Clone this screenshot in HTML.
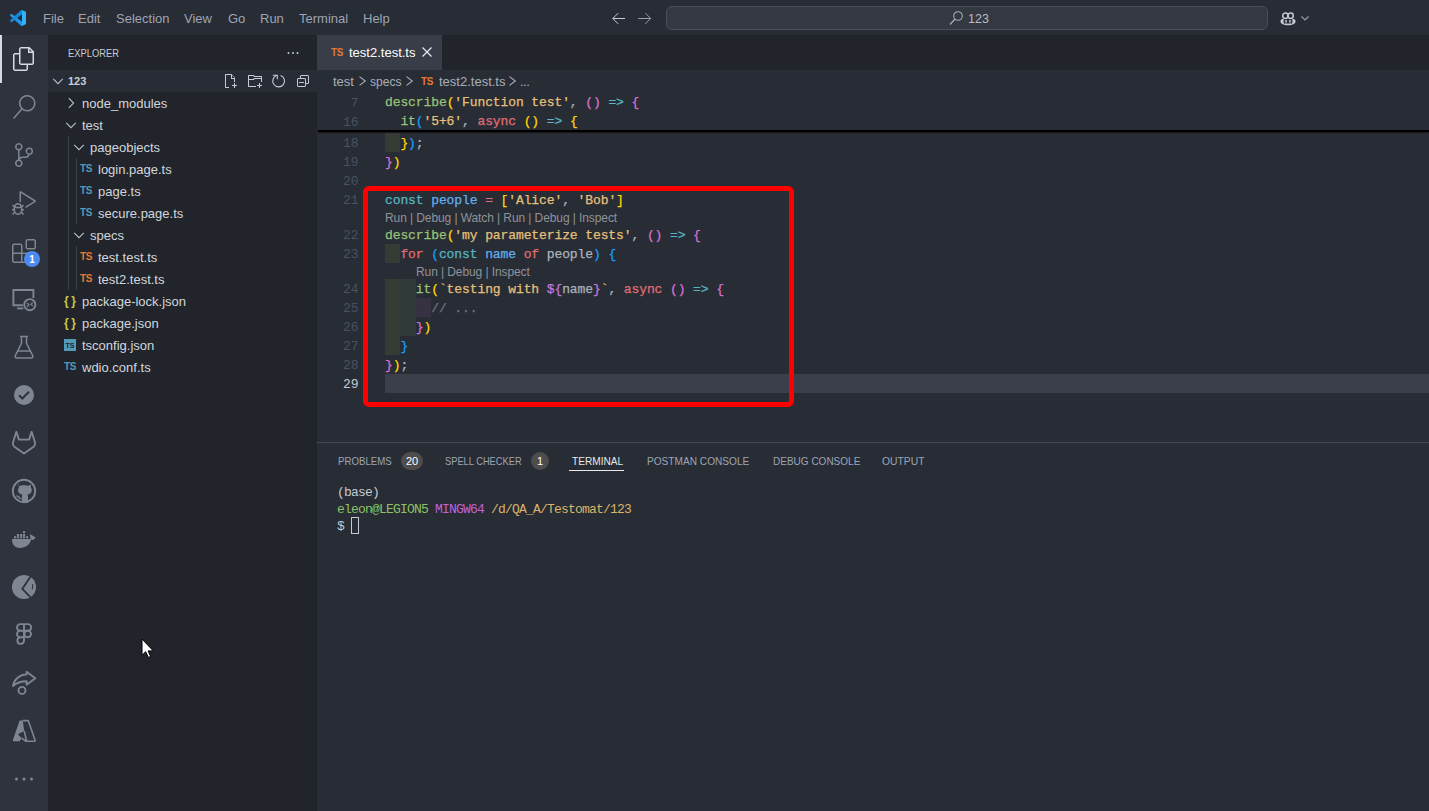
<!DOCTYPE html>
<html><head><meta charset="utf-8">
<style>
*{margin:0;padding:0;box-sizing:border-box}
html,body{width:1429px;height:811px;overflow:hidden;background:#282c34;font-family:"Liberation Sans",sans-serif}
.a{position:absolute}
#title{left:0;top:0;width:1429px;height:35px;background:#282c34}
.menu{top:1px;height:35px;line-height:36px;font-size:13px;color:#9da5b4}
#act{left:0;top:35px;width:48px;height:776px;background:#2f333d}
#side{left:48px;top:35px;width:269px;height:776px;background:#21252b}
#tabs{left:317px;top:35px;width:1112px;height:35px;background:#21252b}
#crumb{left:317px;top:70px;width:1112px;height:22px;background:#282c34}
#editor{left:317px;top:92px;width:1112px;height:350px;background:#282c34;overflow:hidden}
#panel{left:317px;top:442px;width:1112px;height:369px;background:#282c34;border-top:1px solid #46494f}
.row{position:absolute;left:0;width:269px;height:22px;line-height:24px;font-size:13px;color:#d2d6dc;white-space:nowrap}
.code{position:absolute;left:68px;height:19px;line-height:21px;font-family:"Liberation Mono",monospace;font-size:13px;letter-spacing:-0.1px;white-space:pre;color:#abb2bf;-webkit-text-stroke:0.25px}
.ln{position:absolute;left:0;width:41.5px;text-align:right;height:19px;line-height:23px;font-family:"Liberation Mono",monospace;font-size:13px;letter-spacing:-0.1px;color:#495162}
.lens{position:absolute;height:16px;line-height:18px;font-size:12px;color:#8f939a;white-space:pre;letter-spacing:-0.09px}
</style></head><body>
<div id="title" class="a">
<svg class="a" style="left:10px;top:10px" width="16" height="16" viewBox="0 0 100 100"><path fill="#1f98ec" d="M96.5 10.8 75.9.9a6.2 6.2 0 0 0-7.1 1.2L29.4 38 12.2 25a4.2 4.2 0 0 0-5.3.2L1.4 30.3a4.2 4.2 0 0 0 0 6.2L16.3 50 1.4 63.5a4.2 4.2 0 0 0 0 6.2l5.5 5a4.2 4.2 0 0 0 5.3.3l17.2-13L68.8 97.9a6.2 6.2 0 0 0 7.1 1.2l20.6-9.9a6.2 6.2 0 0 0 3.5-5.6V16.4a6.2 6.2 0 0 0-3.5-5.6zM75 72.7 45.1 50 75 27.3z"/><path fill="#0a5fa0" d="M96.5 10.8 75.9.9a6.2 6.2 0 0 0-7.1 1.2L1.4 63.5a4.2 4.2 0 0 0 0 6.2l5.5 5a4.2 4.2 0 0 0 5.3.3L93.4 13.3a4.2 4.2 0 0 1 6.6 3.1v-.2a6.2 6.2 0 0 0-3.5-5.6z" opacity=".3"/><path fill="#30b2ff" d="M75.9 99.1a6.2 6.2 0 0 1-7.1-1.2 3.6 3.6 0 0 0 6.2-2.6V4.6A3.6 3.6 0 0 0 68.8 2a6.2 6.2 0 0 1 7.1-1.2l20.6 9.9a6.2 6.2 0 0 1 3.5 5.6v67.3a6.2 6.2 0 0 1-3.5 5.6z"/></svg>
<div class="a menu" style="left:43px">File</div>
<div class="a menu" style="left:78px">Edit</div>
<div class="a menu" style="left:116px">Selection</div>
<div class="a menu" style="left:184px">View</div>
<div class="a menu" style="left:228px">Go</div>
<div class="a menu" style="left:260px">Run</div>
<div class="a menu" style="left:299px">Terminal</div>
<div class="a menu" style="left:363px">Help</div>
<svg class="a" style="left:610px;top:10px" width="16" height="16" viewBox="0 0 16 16"><path d="M15 8.5H2.8M8.2 3.1 2.8 8.5 8.2 13.9" stroke="#c5cad3" stroke-width="1" fill="none"/></svg>
<svg class="a" style="left:637px;top:10px" width="16" height="16" viewBox="0 0 16 16"><path d="M1.2 8.5H13.7M8.3 3.1 13.7 8.5 8.3 13.9" stroke="#9aa0aa" stroke-width="1" fill="none"/></svg>
<div class="a" style="left:666px;top:6px;width:602px;height:24px;border:1px solid #4a4f5a;border-radius:6px;background:#333841"></div>
<svg class="a" style="left:948px;top:10px" width="16" height="16" viewBox="0 0 16 16"><circle cx="10" cy="6" r="4.3" stroke="#a9aeb7" stroke-width="1.1" fill="none"/><path d="M7 9 2 14.5" stroke="#a9aeb7" stroke-width="1.2"/></svg>
<div class="a" style="left:968px;top:1px;height:36px;line-height:36px;font-size:12.5px;color:#b6bbc4">123</div>
<svg class="a" style="left:1280px;top:11px" width="16" height="16" viewBox="0 0 16 16"><path d="M2 8C.8 8.6.3 9.8.5 11 1 13 4 14.2 8 14.2S15 13 15.5 11C15.7 9.8 15.2 8.6 14 8Z" fill="#c5cad3"/><rect x="3.6" y="7.6" width="8.8" height="5" rx="1.2" fill="#282c34"/><rect x="5.3" y="9" width="1.5" height="2.6" fill="#c5cad3"/><rect x="9.2" y="9" width="1.5" height="2.6" fill="#c5cad3"/><circle cx="5.4" cy="4.8" r="2.7" stroke="#c5cad3" stroke-width="1.5" fill="none"/><circle cx="10.6" cy="4.8" r="2.7" stroke="#c5cad3" stroke-width="1.5" fill="none"/></svg>
<svg class="a" style="left:1299px;top:12px" width="12" height="12" viewBox="0 0 12 12"><path d="M2.5 4.5 6 8l3.5-3.5" stroke="#9aa0aa" stroke-width="1.1" fill="none"/></svg>
</div>
<div id="act" class="a"><div class="a" style="left:0;top:0;width:2px;height:48px;background:#d7dae0"></div><svg class="a" style="left:12px;top:12px" width="24" height="24" viewBox="0 0 24 24"><path d="M17.5 0h-9L7 1.5V6H2.5L1 7.5v15.07L2.5 24h12.07L16 22.57V18h4.7l1.3-1.43V4.5L17.5 0zm0 2.12 2.38 2.38H17.5V2.12zm-3 20.38h-12v-15H7v9.07L8.5 18h6v4.5zm6-6h-12v-15H16V6h4.5v10.5z" fill="#d7dae0"/></svg><svg class="a" style="left:12px;top:60px" width="24" height="24" viewBox="0 0 24 24"><path d="M15.25 0a8.25 8.25 0 0 0-6.18 13.72L1 22.88l1.12 1 8.05-9.12A8.251 8.251 0 1 0 15.25.01V0zm0 15a6.75 6.75 0 1 1 0-13.5 6.75 6.75 0 0 1 0 13.5z" fill="#7f8692"/></svg><svg class="a" style="left:12px;top:108px" width="24" height="24" viewBox="0 0 24 24"><path d="M21.007 8.222A3.738 3.738 0 0 0 15.045 5.2a3.737 3.737 0 0 0 1.156 6.583 2.988 2.988 0 0 1-2.668 1.67h-2.99a4.456 4.456 0 0 0-2.989 1.165V7.4a3.737 3.737 0 1 0-1.494 0v9.117a3.776 3.776 0 1 0 1.816.099 2.99 2.99 0 0 1 2.668-1.667h2.99a4.484 4.484 0 0 0 4.223-3.039 3.736 3.736 0 0 0 3.25-3.687zM4.565 3.738a2.242 2.242 0 1 1 4.484 0 2.242 2.242 0 0 1-4.484 0zm4.484 16.441a2.242 2.242 0 1 1-4.484 0 2.242 2.242 0 0 1 4.484 0zm8.221-9.715a2.242 2.242 0 1 1 0-4.485 2.242 2.242 0 0 1 0 4.485z" fill="#7f8692"/></svg><svg class="a" style="left:12px;top:156px" width="24" height="24" viewBox="0 0 24 24"><path d="M10.94 13.5l-1.32 1.32a3.73 3.73 0 0 0-7.24 0L1.06 13.5 0 14.56l1.72 1.72-.22.22V18H0v1.5h1.5v.08c.077.489.214.966.41 1.42L0 22.94 1.06 24l1.65-1.65A4.308 4.308 0 0 0 6 24a4.31 4.31 0 0 0 3.29-1.65L10.94 24 12 22.94 10.09 21c.198-.464.336-.951.41-1.45v-.05H12V18h-1.5v-1.5l-.22-.22L12 14.56l-1.06-1.06zM6 13.5a2.25 2.25 0 0 1 2.25 2.25h-4.5A2.25 2.25 0 0 1 6 13.5zm3 6a3.33 3.33 0 0 1-3 3 3.33 3.33 0 0 1-3-3v-2.25h6v2.25zm14.76-9.9v1.26L13.5 17.37V15.6l8.5-5.37L9 2v9.46a5.07 5.07 0 0 0-1.5-.72V.63L8.64 0l15.12 9.6z" fill="#7f8692"/></svg><svg class="a" style="left:12px;top:204px" width="24" height="24" viewBox="0 0 24 24"><path d="M13.5 1.5L15 0h7.5L24 1.5V9l-1.5 1.5H15L13.5 9V1.5zm1.5 0V9h7.5V1.5H15zM0 15V6l1.5-1.5H9L10.5 6v7.5H18l1.5 1.5v7.5L18 24H1.5L0 22.5V15zm9-1.5V6H1.5v7.5H9zM9 15H1.5v7.5H9V15zm1.5 7.5H18V15h-7.5v7.5z" fill="#7f8692"/></svg><svg class="a" style="left:0;top:240px" width="48" height="48" viewBox="0 0 48 48"><path d="M22.8 30.2H13.4V15H33.4V23" stroke="#7f8692" stroke-width="1.9" fill="none"/><path d="M17 33.4H23.3" stroke="#7f8692" stroke-width="1.9"/><circle cx="29.8" cy="29.7" r="5.6" stroke="#7f8692" stroke-width="1.9" fill="none"/><path d="M27 28 29 29.7 27 31.8M32.8 27.6 30.9 29.2 32.8 30.9" stroke="#7f8692" stroke-width="1.2" fill="none"/></svg><svg class="a" style="left:12px;top:300px" width="24" height="24" viewBox="0 0 24 24"><path d="M8 1.5h8M9.5 1.5v6.8L3.3 20.6c-.6 1.2.2 2.4 1.5 2.4h14.4c1.3 0 2.1-1.2 1.5-2.4L14.5 8.3V1.5" stroke="#7f8692" stroke-width="1.5" fill="none"/><path d="M6 16h12" stroke="#7f8692" stroke-width="1.5"/></svg><svg class="a" style="left:12px;top:348px" width="24" height="24" viewBox="0 0 24 24"><circle cx="12" cy="12" r="10" fill="#7f8692"/><path d="M7 12.2l3.3 3.3L17 8.8" stroke="#2f333d" stroke-width="2" fill="none"/></svg><svg class="a" style="left:0;top:384px" width="48" height="48" viewBox="0 0 48 48"><path d="M16.4 12.8 18.9 20.6H29.1L31.6 12.8 35.1 23.7Q35.6 26 33.6 27.7L24 34.6 14.4 27.7Q12.4 26 12.9 23.7Z" stroke="#7f8692" stroke-width="1.9" fill="none" stroke-linejoin="round"/></svg><svg class="a" style="left:0;top:432px" width="48" height="48" viewBox="0 0 48 48"><circle cx="24" cy="24" r="11.2" stroke="#7f8692" stroke-width="1.9" fill="none"/><path d="M17.3 17.6l2.6 1.3c1.3-.5 2.7-.6 4.1-.6s2.8.1 4.1.6l2.6-1.3c.3 1 .3 2 .1 2.9.7.7 1 1.6 1 2.6 0 3-2 4.3-4.6 4.6.5.4.8 1 .8 1.8v6.2h-6.2v-6.2c0-.8.3-1.4.8-1.8-2.6-.3-4.6-1.6-4.6-4.6 0-1 .3-1.9 1-2.6-.2-.9-.2-1.9.1-2.9z" fill="#7f8692"/><path d="M16.4 29c1.2-.2 1.9.3 2.6 1.3.6.9 1.4 1.4 2.2 1.2" stroke="#7f8692" stroke-width="1.4" fill="none"/></svg><svg class="a" style="left:0;top:480px" width="48" height="48" viewBox="0 0 48 48"><path d="M12 24H31.2C30.3 29.3 25.8 33 19.5 33 14.8 33 12 29.5 12 24Z" fill="#7f8692"/><path d="M30.2 19 35.8 22.7 33 25 30.8 24.4C30.2 22.6 29.9 20.8 30.2 19Z" fill="#7f8692"/><rect x="14" y="21.2" width="2.2" height="2.1" fill="#7f8692"/><rect x="16.9" y="21.2" width="2.2" height="2.1" fill="#7f8692"/><rect x="20" y="21.2" width="2.2" height="2.1" fill="#7f8692"/><rect x="22.9" y="21.2" width="2.2" height="2.1" fill="#7f8692"/><rect x="26" y="21.2" width="2.2" height="2.1" fill="#7f8692"/><rect x="16.9" y="19" width="2.2" height="2.1" fill="#7f8692"/><rect x="20" y="19" width="2.2" height="2.1" fill="#7f8692"/><rect x="22.9" y="19" width="2.2" height="2.1" fill="#7f8692"/><rect x="22.9" y="16.1" width="2.2" height="2.1" fill="#7f8692"/></svg><svg class="a" style="left:0;top:528px" width="48" height="48" viewBox="0 0 48 48"><circle cx="24" cy="24" r="12" fill="#7f8692"/><path d="M30.4 13.8 22.3 26 30.4 34.2" stroke="#2f333d" stroke-width="1.8" fill="none"/><path d="M32.3 21.3c.5.7.6 2 .3 3l-.4 2.2" stroke="#2f333d" stroke-width="1.1" fill="none"/></svg><svg class="a" style="left:0;top:576px" width="48" height="48" viewBox="0 0 48 48"><path d="M24 13.1H20.3A3.3 3.3 0 0 0 20.3 19.7H24ZM24 13.1H27.9A3.3 3.3 0 0 1 27.9 19.7H24ZM24 19.7H20.3A3.3 3.3 0 0 0 20.3 26.3H24ZM24 26.3H20.3A3.3 3.3 0 1 0 24 29.6Z" stroke="#7f8692" stroke-width="1.9" fill="none" stroke-linejoin="round"/><circle cx="27.7" cy="23" r="3.3" stroke="#7f8692" stroke-width="1.9" fill="none"/></svg><svg class="a" style="left:0;top:624px" width="48" height="48" viewBox="0 0 48 48"><path d="M13 27C14 20.5 19 15.8 26.6 15.4V12.8L35.3 19.2 26.7 25.8V22.2C20 22.2 16.2 24 13 27Z" stroke="#7f8692" stroke-width="1.9" fill="none" stroke-linejoin="round"/><circle cx="22" cy="31.4" r="3.5" stroke="#7f8692" stroke-width="1.9" fill="none"/></svg><svg class="a" style="left:0;top:672px" width="48" height="48" viewBox="0 0 48 48"><path d="M19.6 13.4H22.8L24.2 24 18 27.2 21.8 31.2 19.7 34.3H13.9Q12.5 34.3 12.9 33Z" fill="#7f8692"/><path d="M22.8 13.6H27.4Q28.3 13.6 28.6 14.5L35 33Q35.3 34.3 34 34.3H25.9L21.8 31.2M24.2 24 26.6 34.2" stroke="#7f8692" stroke-width="1.6" fill="none" stroke-linejoin="round"/></svg><svg class="a" style="left:12px;top:732px" width="24" height="24" viewBox="0 0 24 24"><circle cx="4.5" cy="12" r="1.5" fill="#7f8692"/><circle cx="12" cy="12" r="1.5" fill="#7f8692"/><circle cx="19.5" cy="12" r="1.5" fill="#7f8692"/></svg><div class="a" style="left:24px;top:216px;width:16px;height:16px;border-radius:8px;background:#4a8af4;color:#fff;font-size:10px;font-weight:bold;text-align:center;line-height:17px">1</div></div>
<div id="side" class="a"><div class="a" style="left:20px;top:1px;height:35px;line-height:35px;font-size:11px;color:#c8ccd4;transform:scaleX(0.85);transform-origin:0 0">EXPLORER</div><svg class="a" style="left:237px;top:10px" width="16" height="16" viewBox="0 0 16 16"><circle cx="3.5" cy="8" r="1" fill="#c5cad3"/><circle cx="8" cy="8" r="1" fill="#c5cad3"/><circle cx="12.5" cy="8" r="1" fill="#c5cad3"/></svg><div class="a" style="left:0;top:35px;width:269px;height:22px;background:#282c34"></div><svg class="a" style="left:2px;top:38px" width="16" height="16" viewBox="0 0 16 16"><path d="M3.2 5.8 8 10.6l4.8-4.8" stroke="#b8bdc6" stroke-width="1.1" fill="none"/></svg><div class="a" style="left:20px;top:35px;height:22px;line-height:22px;font-size:11px;font-weight:bold;color:#c8ccd4">123</div><svg class="a" style="left:174px;top:38px" width="16" height="16" viewBox="0 0 16 16"><path d="M9.5 1.1 13 4.6V9h-1V6H9V2H4v12h3v1H3.5l-.5-.5v-13l.5-.5h6zM10 2.2V5h2.8zM12 10h1v2h2v1h-2v2h-1v-2h-2v-1h2z" fill="#c5cad3"/></svg><svg class="a" style="left:199px;top:38px" width="16" height="16" viewBox="0 0 16 16"><path d="M14.5 3H7.7l-.9-.9L6.5 2h-5l-.5.5v11l.5.5H9v-1H2V7h4.5l.4-.1.9-.9H14v3h1V3.5l-.5-.5zM14 5H7.5l-.4.1-.9.9H2V3h4.3l.9.9.3.1H14zM12 10h1v2h2v1h-2v2h-1v-2h-2v-1h2z" fill="#c5cad3"/></svg><svg class="a" style="left:223px;top:38px" width="16" height="16" viewBox="0 0 16 16"><path d="M9.6 2.4A5.9 5.9 0 1 1 6 2.3" stroke="#c5cad3" stroke-width="1.1" fill="none"/><path d="M1.8 2.3H6.3V6.2" stroke="#c5cad3" stroke-width="1.1" fill="none"/></svg><svg class="a" style="left:247px;top:38px" width="16" height="16" viewBox="0 0 16 16"><path d="M9 9H4v1h5V9z" fill="#c5cad3"/><path d="M5 3l1-1h7l1 1v7l-1 1h-2v2l-1 1H3l-1-1V6l1-1h2V3zm1 2h4l1 1v4h2V3H6v2zm4 1H3v7h7V6z" fill="#c5cad3"/></svg><svg class="a" style="left:15px;top:60px" width="16" height="16" viewBox="0 0 16 16"><path d="M5.8 3.2 10.6 8l-4.8 4.8" stroke="#b8bdc6" stroke-width="1.1" fill="none"/></svg><div class="row" style="left:34px;top:57px;width:auto">node_modules</div><svg class="a" style="left:15px;top:82px" width="16" height="16" viewBox="0 0 16 16"><path d="M3.2 5.8 8 10.6l4.8-4.8" stroke="#b8bdc6" stroke-width="1.1" fill="none"/></svg><div class="row" style="left:34px;top:79px;width:auto">test</div><svg class="a" style="left:23px;top:104px" width="16" height="16" viewBox="0 0 16 16"><path d="M3.2 5.8 8 10.6l4.8-4.8" stroke="#b8bdc6" stroke-width="1.1" fill="none"/></svg><div class="row" style="left:42px;top:101px;width:auto">pageobjects</div><div class="a" style="left:32px;top:128px;font-size:10px;font-weight:bold;color:#519aba;line-height:12px;letter-spacing:-0.3px">TS</div><div class="row" style="left:50px;top:123px;width:auto">login.page.ts</div><div class="a" style="left:32px;top:150px;font-size:10px;font-weight:bold;color:#519aba;line-height:12px;letter-spacing:-0.3px">TS</div><div class="row" style="left:50px;top:145px;width:auto">page.ts</div><div class="a" style="left:32px;top:172px;font-size:10px;font-weight:bold;color:#519aba;line-height:12px;letter-spacing:-0.3px">TS</div><div class="row" style="left:50px;top:167px;width:auto">secure.page.ts</div><svg class="a" style="left:23px;top:192px" width="16" height="16" viewBox="0 0 16 16"><path d="M3.2 5.8 8 10.6l4.8-4.8" stroke="#b8bdc6" stroke-width="1.1" fill="none"/></svg><div class="row" style="left:42px;top:189px;width:auto">specs</div><div class="a" style="left:32px;top:216px;font-size:10px;font-weight:bold;color:#e37933;line-height:12px;letter-spacing:-0.3px">TS</div><div class="row" style="left:50px;top:211px;width:auto">test.test.ts</div><div class="a" style="left:32px;top:238px;font-size:10px;font-weight:bold;color:#e37933;line-height:12px;letter-spacing:-0.3px">TS</div><div class="row" style="left:50px;top:233px;width:auto">test2.test.ts</div><div class="a" style="left:16px;top:259px;font-size:12px;font-weight:bold;color:#cbcb41;line-height:14px;letter-spacing:2.5px">{}</div><div class="row" style="left:34px;top:255px;width:auto">package-lock.json</div><div class="a" style="left:16px;top:281px;font-size:12px;font-weight:bold;color:#cbcb41;line-height:14px;letter-spacing:2.5px">{}</div><div class="row" style="left:34px;top:277px;width:auto">package.json</div><div class="a" style="left:16px;top:304px;width:12px;height:12px;background:#519aba;color:#21252b;font-size:7px;font-weight:bold;line-height:14px;text-align:center">TS</div><div class="row" style="left:34px;top:299px;width:auto">tsconfig.json</div><div class="a" style="left:16px;top:326px;font-size:10px;font-weight:bold;color:#519aba;line-height:12px;letter-spacing:-0.3px">TS</div><div class="row" style="left:34px;top:321px;width:auto">wdio.conf.ts</div><div class="a" style="left:20px;top:101px;width:1px;height:154px;background:#3b3f47"></div><div class="a" style="left:28px;top:123px;width:1px;height:66px;background:#3b3f47"></div><div class="a" style="left:28px;top:211px;width:1px;height:44px;background:#3b3f47"></div><svg class="a" style="left:92.5px;top:602.5px" width="14" height="20" viewBox="0 0 14 20"><path d="M1 1V17.2l3.7-3.5 2.6 5.7 2.3-1-2.5-5.5H12.3z" fill="#fff" stroke="#000" stroke-width="1"/></svg></div>
<div id="tabs" class="a">
<div class="a" style="left:0;top:0;width:125px;height:35px;background:#383d48"></div>
<div class="a" style="left:14px;top:12px;font-size:10px;font-weight:bold;color:#e37933;line-height:12px;letter-spacing:-0.3px">TS</div>
<div class="a" style="left:32px;top:0;height:35px;line-height:35px;font-size:13px;color:#ffffff">test2.test.ts</div>
<svg class="a" style="left:102px;top:9px" width="16" height="16" viewBox="0 0 16 16"><path d="M3.5 3.5l9 9M12.5 3.5l-9 9" stroke="#e6e8ec" stroke-width="1.2"/></svg>
</div>
<div id="crumb" class="a">
<div class="a" style="left:16px;top:1px;height:22px;line-height:22px;font-size:13px;color:#a9afba">test</div>
<svg class="a" style="left:39px;top:3px" width="16" height="16" viewBox="0 0 16 16"><path d="M3.5 3.6 9.3 8 3.5 12.4" stroke="#a9afba" stroke-width="1.1" fill="none"/></svg>
<div class="a" style="left:53px;top:1px;height:22px;line-height:22px;font-size:13px;color:#a9afba;transform:scaleX(0.93);transform-origin:0 0">specs</div>
<svg class="a" style="left:86px;top:3px" width="16" height="16" viewBox="0 0 16 16"><path d="M3.5 3.6 9.3 8 3.5 12.4" stroke="#a9afba" stroke-width="1.1" fill="none"/></svg>
<div class="a" style="left:104px;top:6px;font-size:10px;font-weight:bold;color:#e37933;line-height:12px;letter-spacing:-0.3px">TS</div>
<div class="a" style="left:122px;top:1px;height:22px;line-height:22px;font-size:13px;color:#a9afba">test2.test.ts</div>
<svg class="a" style="left:189px;top:3px" width="16" height="16" viewBox="0 0 16 16"><path d="M3.5 3.6 9.3 8 3.5 12.4" stroke="#a9afba" stroke-width="1.1" fill="none"/></svg>
<div class="a" style="left:203px;top:1px;height:22px;line-height:22px;font-size:13px;color:#a9afba;letter-spacing:-0.5px">...</div>
</div>
<div id="editor" class="a"><div class="a" style="left:68px;top:282px;width:1044px;height:19px;background:#3a3f4b"></div><div class="a" style="left:68px;top:41px;width:15.4px;height:19px;background:#373b35"></div><div class="a" style="left:68px;top:152px;width:15.4px;height:19px;background:#373b35"></div><div class="a" style="left:68px;top:187px;width:15.4px;height:76px;background:#373b35"></div><div class="a" style="left:83.4px;top:187px;width:15.4px;height:57px;background:#2e3b39"></div><div class="a" style="left:98.8px;top:206px;width:15.4px;height:19px;background:#373242"></div><div class="ln" style="top:0px;color:#495162">7</div><div class="code" style="top:0px"><span style="color:#98c379">describe</span><span style="color:#ffd700">(</span><span style="color:#e5c07b">'Function test'</span><span style="color:#abb2bf">, </span><span style="color:#da70d6">()</span><span style="color:#abb2bf"> </span><span style="color:#56b6c2">=&gt;</span><span style="color:#abb2bf"> </span><span style="color:#da70d6">{</span></div><div class="ln" style="top:19px;color:#495162">16</div><div class="code" style="top:19px"><span style="color:#abb2bf">  </span><span style="color:#98c379">it</span><span style="color:#179fff">(</span><span style="color:#e5c07b">'5+6'</span><span style="color:#abb2bf">, </span><span style="color:#e06c75">async</span><span style="color:#abb2bf"> </span><span style="color:#ffd700">()</span><span style="color:#abb2bf"> </span><span style="color:#56b6c2">=&gt;</span><span style="color:#abb2bf"> </span><span style="color:#ffd700">{</span></div><div class="ln" style="top:40px;color:#495162">18</div><div class="code" style="top:41px"><span style="color:#abb2bf">  </span><span style="color:#ffd700">}</span><span style="color:#179fff">)</span><span style="color:#abb2bf">;</span></div><div class="ln" style="top:59px;color:#495162">19</div><div class="code" style="top:60px"><span style="color:#da70d6">}</span><span style="color:#ffd700">)</span></div><div class="ln" style="top:78px;color:#495162">20</div><div class="code" style="top:79px"></div><div class="ln" style="top:97px;color:#495162">21</div><div class="code" style="top:98px"><span style="color:#56b6c2">const</span><span style="color:#abb2bf"> </span><span style="color:#61afef">people</span><span style="color:#abb2bf"> </span><span style="color:#e06c75">=</span><span style="color:#abb2bf"> </span><span style="color:#ffd700">[</span><span style="color:#e5c07b">'Alice'</span><span style="color:#abb2bf">, </span><span style="color:#e5c07b">'Bob'</span><span style="color:#ffd700">]</span></div><div class="ln" style="top:132px;color:#495162">22</div><div class="code" style="top:133px"><span style="color:#98c379">describe</span><span style="color:#ffd700">(</span><span style="color:#e5c07b">'my parameterize tests'</span><span style="color:#abb2bf">, </span><span style="color:#da70d6">()</span><span style="color:#abb2bf"> </span><span style="color:#56b6c2">=&gt;</span><span style="color:#abb2bf"> </span><span style="color:#da70d6">{</span></div><div class="ln" style="top:151px;color:#495162">23</div><div class="code" style="top:152px"><span style="color:#abb2bf">  </span><span style="color:#e06c75">for</span><span style="color:#abb2bf"> </span><span style="color:#179fff">(</span><span style="color:#56b6c2">const</span><span style="color:#abb2bf"> </span><span style="color:#61afef">name</span><span style="color:#abb2bf"> </span><span style="color:#e06c75">of</span><span style="color:#abb2bf"> </span><span style="color:#abb2bf">people</span><span style="color:#179fff">)</span><span style="color:#abb2bf"> </span><span style="color:#179fff">{</span></div><div class="ln" style="top:186px;color:#495162">24</div><div class="code" style="top:187px"><span style="color:#abb2bf">    </span><span style="color:#98c379">it</span><span style="color:#ffd700">(</span><span style="color:#e5c07b">`testing with </span><span style="color:#c678dd">${</span><span style="color:#abb2bf">name</span><span style="color:#c678dd">}</span><span style="color:#e5c07b">`</span><span style="color:#abb2bf">, </span><span style="color:#e06c75">async</span><span style="color:#abb2bf"> </span><span style="color:#da70d6">()</span><span style="color:#abb2bf"> </span><span style="color:#56b6c2">=&gt;</span><span style="color:#abb2bf"> </span><span style="color:#da70d6">{</span></div><div class="ln" style="top:205px;color:#495162">25</div><div class="code" style="top:206px"><span style="color:#abb2bf">      </span><span style="color:#6f7581">// ...</span></div><div class="ln" style="top:224px;color:#495162">26</div><div class="code" style="top:225px"><span style="color:#abb2bf">    </span><span style="color:#da70d6">}</span><span style="color:#ffd700">)</span></div><div class="ln" style="top:243px;color:#495162">27</div><div class="code" style="top:244px"><span style="color:#abb2bf">  </span><span style="color:#179fff">}</span></div><div class="ln" style="top:262px;color:#495162">28</div><div class="code" style="top:263px"><span style="color:#da70d6">}</span><span style="color:#ffd700">)</span><span style="color:#abb2bf">;</span></div><div class="ln" style="top:281px;color:#c6cad2">29</div><div class="code" style="top:282px"></div><div class="lens" style="left:68px;top:117px">Run | Debug | Watch | Run | Debug | Inspect</div><div class="lens" style="left:99px;top:171px">Run | Debug | Inspect</div><div class="a" style="left:1px;top:38px;width:1111px;height:2px;background:#000;box-shadow:0 1px 1px rgba(0,0,0,.5)"></div><div class="a" style="left:46px;top:94px;width:431px;height:221px;border:5px solid #ff0000;border-radius:6px"></div></div>
<div id="panel" class="a"><div class="a" style="left:20.5px;top:8px;height:20px;line-height:20px;font-size:11px;transform:scaleX(0.88);transform-origin:0 0;color:#9da5b4">PROBLEMS</div><div class="a" style="left:84px;top:9px;width:22px;height:18px;border-radius:9px;background:#4d4d4d;color:#fff;font-size:11px;text-align:center;line-height:18px">20</div><div class="a" style="left:128px;top:8px;height:20px;line-height:20px;font-size:11px;transform:scaleX(0.845);transform-origin:0 0;color:#9da5b4">SPELL CHECKER</div><div class="a" style="left:214px;top:9px;width:18px;height:18px;border-radius:9px;background:#4d4d4d;color:#fff;font-size:11px;text-align:center;line-height:18px">1</div><div class="a" style="left:254.5px;top:8px;height:20px;line-height:20px;font-size:11px;transform:scaleX(0.92);transform-origin:0 0;color:#e7e9ed">TERMINAL</div><div class="a" style="left:252px;top:27px;width:55px;height:1px;background:#e7e9ed"></div><div class="a" style="left:329.5px;top:8px;height:20px;line-height:20px;font-size:11px;transform:scaleX(0.92);transform-origin:0 0;color:#9da5b4">POSTMAN CONSOLE</div><div class="a" style="left:455.5px;top:8px;height:20px;line-height:20px;font-size:11px;transform:scaleX(0.91);transform-origin:0 0;color:#9da5b4">DEBUG CONSOLE</div><div class="a" style="left:565px;top:8px;height:20px;line-height:20px;font-size:11px;transform:scaleX(0.94);transform-origin:0 0;color:#9da5b4">OUTPUT</div><div class="a" style="left:20px;top:41px;font-family:'Liberation Mono',monospace;font-size:13px;letter-spacing:-0.8px;white-space:pre;height:17px;line-height:17px;color:#c5cad3">(base)</div><div class="a" style="left:20px;top:58px;font-family:'Liberation Mono',monospace;font-size:13px;letter-spacing:-0.8px;white-space:pre;height:17px;line-height:17px"><span style="color:#8cc265">eleon@LEGION5</span> <span style="color:#c162de">MINGW64</span> <span style="color:#d8b46c">/d/QA_A/Testomat/123</span></div><div class="a" style="left:20px;top:75px;font-family:'Liberation Mono',monospace;font-size:13px;letter-spacing:-0.8px;white-space:pre;height:17px;line-height:17px;color:#c5cad3">$</div><div class="a" style="left:34px;top:74px;width:7.5px;height:17px;border:1px solid #c5cad3"></div></div>
</body></html>
